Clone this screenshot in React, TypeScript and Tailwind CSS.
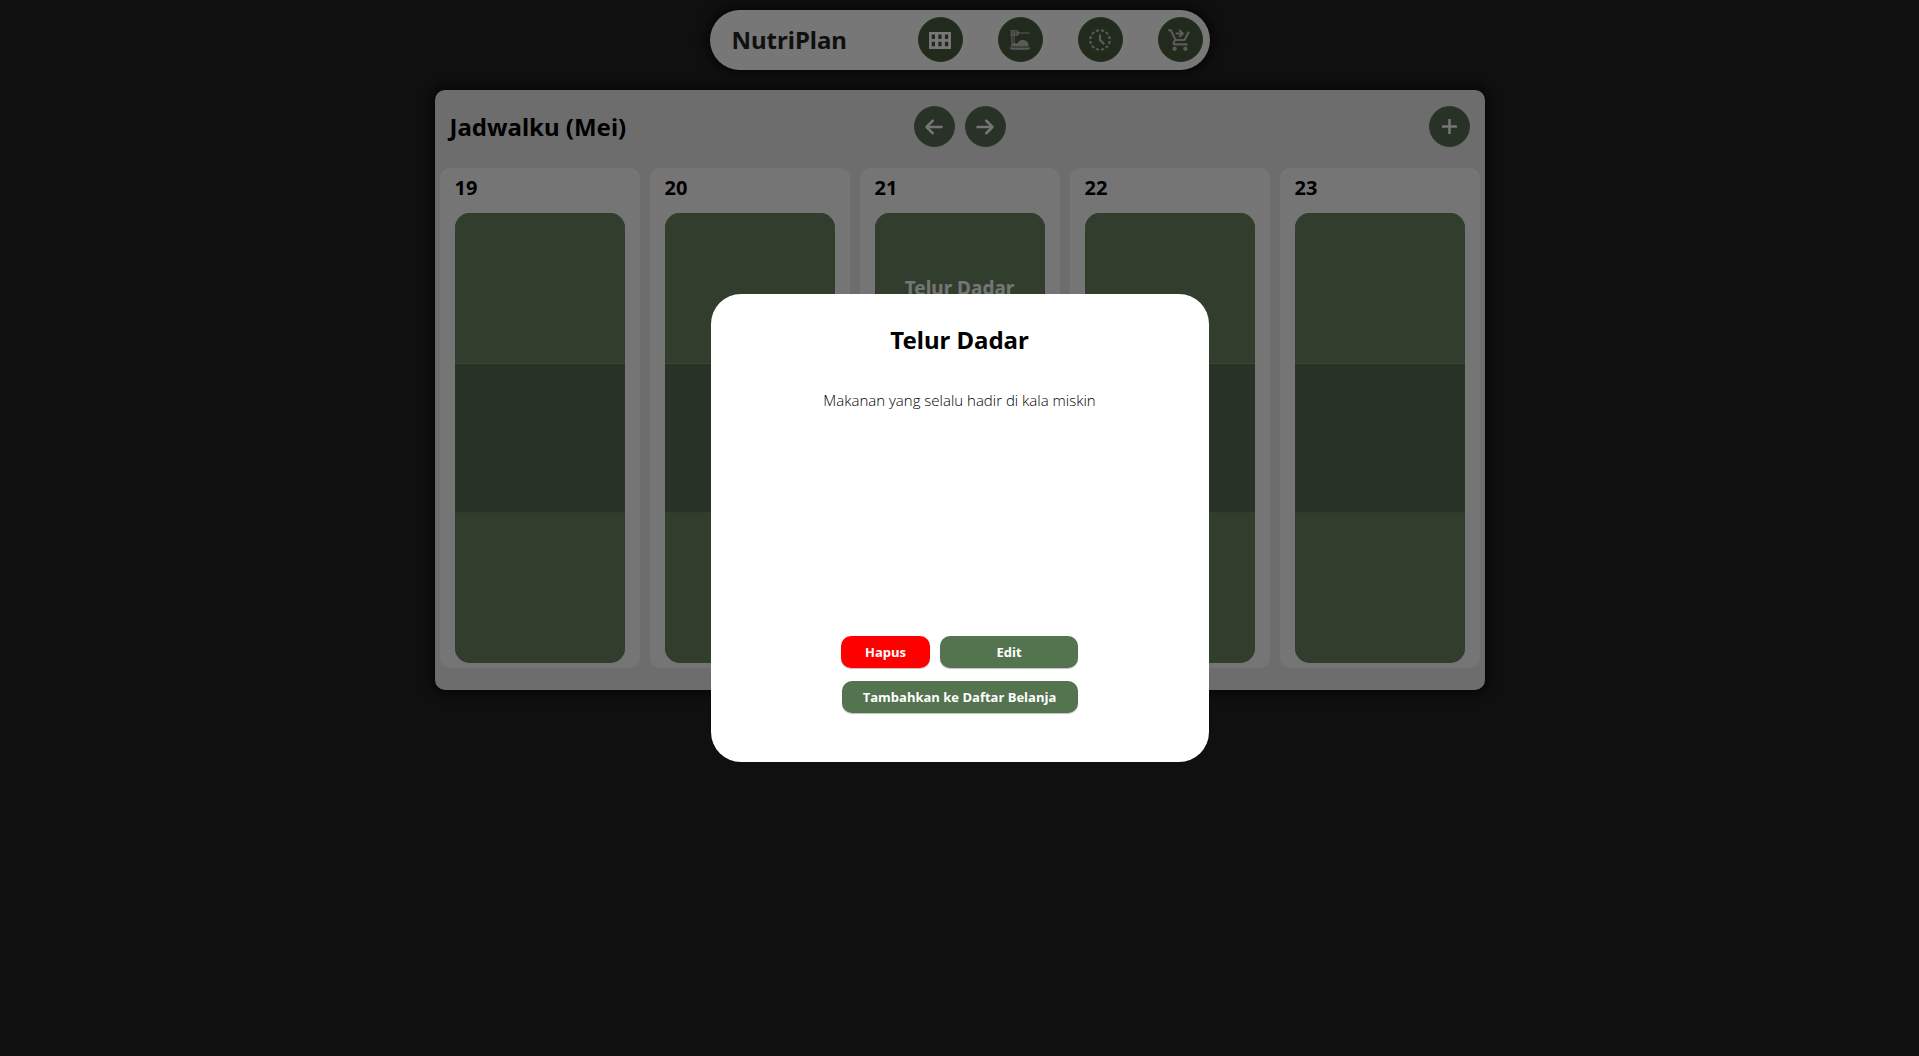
import React from "react";
import {
  MdDinnerDining,
  MdHistoryToggleOff,
  MdShoppingCartCheckout,
} from "react-icons/md";
import { FaArrowLeft, FaArrowRight } from "react-icons/fa6";

type Day = { date: number; meals: [string, string, string] };

const days: Day[] = [
  { date: 19, meals: ["", "", ""] },
  { date: 20, meals: ["", "", ""] },
  { date: 21, meals: ["Telur Dadar", "", ""] },
  { date: 22, meals: ["", "", ""] },
  { date: 23, meals: ["", "", ""] },
];

function GridIcon({ size }: { size: number }) {
  return (
    <svg width={size} height={size} viewBox="0 0 26 26" fill="currentColor" fillRule="evenodd">
      <path d="M2 5h22v17H2zM4.700 7.500v4.500h3.300v-4.500zM11.300 7.500v4.500h3.300v-4.500zM17.900 7.500v4.500h3.300v-4.500zM4.700 14.800v4.500h3.300v-4.500zM11.300 14.800v4.500h3.300v-4.500zM17.900 14.800v4.500h3.300v-4.500z" />
    </svg>
  );
}

const links = [
  { label: "Jadwal", Icon: GridIcon, tone: "text-[#eeeeee]" },
  { label: "Makanan", Icon: MdDinnerDining, tone: "text-[#b4b4b4]" },
  { label: "Riwayat", Icon: MdHistoryToggleOff, tone: "text-[#b4b4b4]" },
  { label: "Daftar Belanja", Icon: MdShoppingCartCheckout, tone: "text-[#b4b4b4]" },
];

const roundButton =
  "flex size-[41px] items-center justify-center rounded-full border border-[#527050] bg-[#50644c] text-[#ebebeb]";

function NavBar() {
  return (
    <nav className="flex h-[60px] w-full max-w-[500px] items-center justify-between rounded-full bg-[#eeeeee] pr-[7px] pb-px pl-[22px] shadow-[0_0_10px_5px_rgba(0,0,0,0.5)]">
      <span className="text-2xl font-bold text-[#202020]">NutriPlan</span>
      <ul className="flex gap-[35px]">
        {links.map(({ label, Icon, tone }) => (
          <li key={label}>
            <a
              href="#"
              aria-label={label}
              className={"flex size-[45px] items-center justify-center rounded-full border border-[#456341] bg-[#42553b] " + tone}
            >
              <Icon size={26} />
            </a>
          </li>
        ))}
      </ul>
    </nav>
  );
}

function DayColumn({ day }: { day: Day }) {
  return (
    <article className="flex-1 rounded-[10px] bg-[#ebebeb] px-[15px] pb-[5px]">
      <h2 className="pt-1 pb-[9px] text-xl leading-8 font-bold">{day.date}</h2>
      <div className="overflow-hidden rounded-[15px] bg-[#627c5a]">
        {day.meals.map((meal, i) => (
          <button
            key={i}
            type="button"
            aria-label={meal || "Kosong"}
            className={
              "flex h-[150px] w-full items-center justify-center text-[19px] font-bold text-[#ebebeb] " +
              (i === 1 ? "border-y border-t-[#748c6c] border-b-[#5c7455] bg-[#50644c]" : "bg-[#627c5a]")
            }
          >
            {meal}
          </button>
        ))}
      </div>
    </article>
  );
}

function Schedule() {
  return (
    <main className="w-full max-w-[1050px] rounded-[10px] bg-[#dbdbdb] px-[5px] pb-[22px] shadow-[0_0_10px_5px_rgba(0,0,0,0.5)]">
      <header className="grid grid-cols-3 items-center px-2.5 pt-4 pb-[21px]">
        <h1 className="text-2xl font-bold">Jadwalku (Mei)</h1>
        <div className="flex justify-center gap-2.5">
          <button type="button" aria-label="Sebelumnya" className={roundButton}>
            <FaArrowLeft size={20} />
          </button>
          <button type="button" aria-label="Berikutnya" className={roundButton}>
            <FaArrowRight size={20} />
          </button>
        </div>
        <button type="button" aria-label="Tambah" className={roundButton + " justify-self-end"}>
          <svg width="15" height="15" viewBox="0 0 15 15" stroke="currentColor" strokeWidth="2.5">
            <path d="M7.500 0v15M0 7.500h15" />
          </svg>
        </button>
      </header>
      <section className="flex gap-2.5">
        {days.map((day) => (
          <DayColumn key={day.date} day={day} />
        ))}
      </section>
    </main>
  );
}

const actionButton =
  "h-8 rounded-[10px] pt-0.5 text-[13px] font-bold text-white shadow-[0_1px_1px_rgba(0,0,0,0.25)]";

function MealDialog() {
  return (
    <div className="fixed inset-0 flex items-center justify-center bg-black/50">
      <section
        role="dialog"
        aria-modal="true"
        aria-labelledby="meal-title"
        className="flex w-full max-w-[498px] flex-col items-center rounded-[30px] bg-white px-8 pt-[30px] pb-[49px]"
      >
        <h2 id="meal-title" className="text-2xl leading-8 font-bold">
          Telur Dadar
        </h2>
        <p className="mt-8 min-h-[248px] font-['Open_Sans',sans-serif] text-[15px] leading-6 font-light">
          Makanan yang selalu hadir di kala miskin
        </p>
        <div className="flex flex-col items-center gap-[13px] font-['Open_Sans',sans-serif]">
          <div className="flex gap-2.5">
            <button type="button" className={actionButton + " w-[89px] bg-[#ff0000]"}>
              Hapus
            </button>
            <button type="button" className={actionButton + " w-[138px] bg-[#54734f]"}>
              Edit
            </button>
          </div>
          <button type="button" className={actionButton + " w-[236px] bg-[#54734f]"}>
            Tambahkan ke Daftar Belanja
          </button>
        </div>
      </section>
    </div>
  );
}

export default function App() {
  return (
    <div className="flex min-h-screen flex-col items-center gap-5 bg-[#202020] pt-2.5 font-['Noto_Sans',sans-serif] text-black">
      <NavBar />
      <Schedule />
      <MealDialog />
    </div>
  );
}
